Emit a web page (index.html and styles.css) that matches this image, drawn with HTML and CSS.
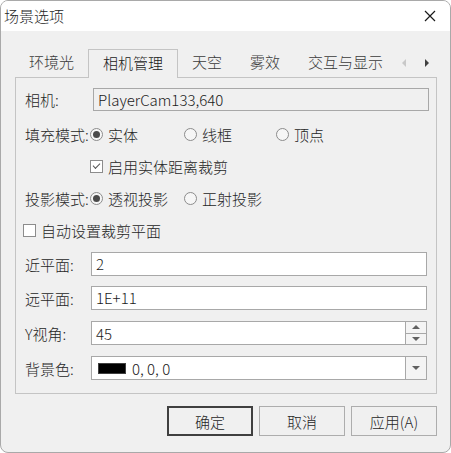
FILE: index.html
```html
<!DOCTYPE html>
<html lang="zh-CN">
<head>
  <meta charset="UTF-8" />
  <title>场景选项</title>
  <link rel="stylesheet" href="styles.css">
</head>
<body>
  <div class="window">
    <div class="titlebar">
      <span class="title">场景选项</span>
      <svg class="close" width="12" height="12" viewBox="0 0 12 12">
        <path d="M1 1 L11 11 M11 1 L1 11" stroke="#1a1a1a" stroke-width="1.2" fill="none"/>
      </svg>
    </div>

    <div class="content">
      <!-- tabs -->
      <div class="tabs">
        <div class="tab">环境光</div>
        <div class="tab active">相机管理</div>
        <div class="tab">天空</div>
        <div class="tab">雾效</div>
        <div class="tab">交互与显示</div>
        <div class="tab-arrows">
          <span class="arrow left off"></span>
          <span class="arrow right"></span>
        </div>
      </div>

      <div class="panel">
        <div class="row row-camera">
          <label class="label label-wide">相机:</label>
          <div class="field readonly">PlayerCam133,640</div>
        </div>

        <div class="row row-opt">
          <label class="label">填充模式:</label>
          <div class="radio-group">
            <span class="option"><span class="radio on"></span>实体</span>
            <span class="option"><span class="radio"></span>线框</span>
            <span class="option"><span class="radio"></span>顶点</span>
          </div>
        </div>

        <div class="row row-opt indent">
          <span class="option"><span class="check on"></span>启用实体距离裁剪</span>
        </div>

        <div class="row row-opt">
          <label class="label">投影模式:</label>
          <div class="radio-group">
            <span class="option"><span class="radio on"></span>透视投影</span>
            <span class="option"><span class="radio"></span>正射投影</span>
          </div>
        </div>

        <div class="row row-opt auto">
          <span class="option"><span class="check"></span>自动设置裁剪平面</span>
        </div>

        <div class="row row-input first">
          <label class="label">近平面:</label>
          <div class="field">2</div>
        </div>

        <div class="row row-input near">
          <label class="label">远平面:</label>
          <div class="field">1E+11</div>
        </div>

        <div class="row row-input">
          <label class="label">Y视角:</label>
          <div class="field with-btn">
            <span class="value">45</span>
            <span class="spin">
              <span class="spin-btn"><span class="tri up"></span></span>
              <span class="spin-btn"><span class="tri down"></span></span>
            </span>
          </div>
        </div>

        <div class="row row-input">
          <label class="label">背景色:</label>
          <div class="field with-btn">
            <span class="value"><span class="swatch"></span>0, 0, 0</span>
            <span class="drop"><span class="tri down"></span></span>
          </div>
        </div>
      </div>

      <div class="buttons">
        <button class="btn default">确定</button>
        <button class="btn">取消</button>
        <button class="btn">应用(A)</button>
      </div>
    </div>
  </div>
</body>
</html>
```

FILE: styles.css
```css
body {
  margin: 0;
  background: #ffffff;
  font-family: "Noto Sans CJK SC", sans-serif;
  font-size: 15px;
  font-weight: 300;
  color: #262626;
}

.window {
  width: 451px;
  height: 453px;
  box-sizing: border-box;
  border: 1px solid #a9a9a9;
  border-radius: 8px;
  overflow: hidden;
  background: #f0f0f0;
}

.titlebar {
  height: 30px;
  background: #ffffff;
  display: flex;
  align-items: center;
  justify-content: space-between;
  padding: 0 14px 0 3px;
}

.title {
  line-height: 30px;
}

.content {
  padding: 18px 0 0 14px;
}

/* tabs */
.tabs {
  display: flex;
  align-items: flex-end;
  height: 28px;
  width: 422px;
}

.tab {
  padding: 0 14px;
  height: 28px;
  line-height: 26px;
  color: #3a3a3a;
  box-sizing: border-box;
}

.tab.active {
  color: #1a1a1a;
  border: 1px solid #c4c4c4;
  border-bottom: none;
  height: 29px;
  margin-bottom: -1px;
  background: #f0f0f0;
  position: relative;
  z-index: 1;
}

.tab-arrows {
  margin-left: auto;
  display: flex;
  gap: 19px;
  height: 28px;
  align-items: center;
  padding-right: 8px;
}

.arrow {
  width: 0;
  height: 0;
  border-top: 4px solid transparent;
  border-bottom: 4px solid transparent;
}

.arrow.left {
  border-right: 4px solid #404040;
}

.arrow.right {
  border-left: 4px solid #404040;
}

.arrow.off {
  border-right-color: #c8c8c8;
}

/* panel */
.panel {
  width: 422px;
  height: 317px;
  box-sizing: border-box;
  border: 1px solid #c4c4c4;
  padding: 10px 9px 0 9px;
}

.row {
  display: flex;
  align-items: center;
}

.label {
  width: 66px;
  flex: none;
  white-space: nowrap;
}

.label-wide {
  width: 68px;
}

.field {
  flex: 1;
  height: 24px;
  box-sizing: border-box;
  border: 1px solid #a8a8a8;
  background: #ffffff;
  line-height: 21px;
  padding-left: 4px;
  color: #1a1a1a;
  display: flex;
}

.field.readonly {
  background: #f0f0f0;
  margin-right: -2px;
  height: 23px;
}

.row-camera {
  height: 23px;
}

.row-opt {
  height: 20px;
  margin-top: 12px;
}

.row-camera + .row-opt {
  margin-top: 13px;
}

.indent {
  padding-left: 65px;
}

.auto {
  margin-left: -2px;
}

.row-input {
  height: 24px;
  margin-top: 10px;
}

.row-input.first {
  margin-top: 12px;
}

.row-input + .row-input {
  margin-top: 11px;
}

.row-input.near {
  margin-top: 10px;
}

.radio-group {
  display: flex;
  margin-left: -1px;
}

.option {
  display: flex;
  align-items: center;
  width: 94px;
  white-space: nowrap;
}

.radio-group .option:nth-child(2) {
  width: 92px;
}

.radio, .check {
  width: 13px;
  height: 13px;
  box-sizing: border-box;
  border: 1px solid #8c8c8c;
  background: #ffffff;
  margin-right: 5px;
  flex: none;
  display: flex;
  align-items: center;
  justify-content: center;
}

.radio {
  border-radius: 50%;
  background: #f6f6f6;
}

.radio.on::after {
  content: "";
  width: 7px;
  height: 7px;
  border-radius: 50%;
  background: #4a4a4a;
}

.check.on::after {
  content: "";
  width: 6px;
  height: 3px;
  border-left: 1px solid #555555;
  border-bottom: 1px solid #555555;
  transform: rotate(-45deg);
  margin-top: -2px;
}

.with-btn {
  padding-left: 0;
}

.value {
  flex: 1;
  padding-left: 4px;
  display: flex;
  align-items: center;
}

.swatch {
  width: 28px;
  height: 11px;
  box-sizing: border-box;
  background: #000000;
  border: 1px solid #404040;
  margin: 0 6px 0 2px;
}

.spin {
  width: 20px;
  border-left: 1px solid #a8a8a8;
  display: flex;
  flex-direction: column;
}

.spin-btn {
  flex: 1;
  display: flex;
  align-items: center;
  justify-content: center;
  background: #f4f4f4;
}

.spin-btn + .spin-btn {
  border-top: 1px solid #a8a8a8;
}

.drop {
  width: 20px;
  border-left: 1px solid #a8a8a8;
  background: #f4f4f4;
  display: flex;
  align-items: center;
  justify-content: center;
}

.tri {
  width: 0;
  height: 0;
  border-left: 4px solid transparent;
  border-right: 4px solid transparent;
}

.tri.up {
  border-bottom: 4px solid #606060;
}

.tri.down {
  border-top: 4px solid #606060;
}

/* buttons */
.buttons {
  display: flex;
  justify-content: flex-end;
  gap: 6px;
  width: 422px;
  margin-top: 12px;
}

.btn {
  width: 86px;
  height: 30px;
  box-sizing: border-box;
  font-family: inherit;
  font-size: 15px;
  font-weight: 300;
  color: #262626;
  background: #f0f0f0;
  border: 1px solid #adadad;
  padding: 0;
}

.btn.default {
  border: 2px solid #404040;
}
```
